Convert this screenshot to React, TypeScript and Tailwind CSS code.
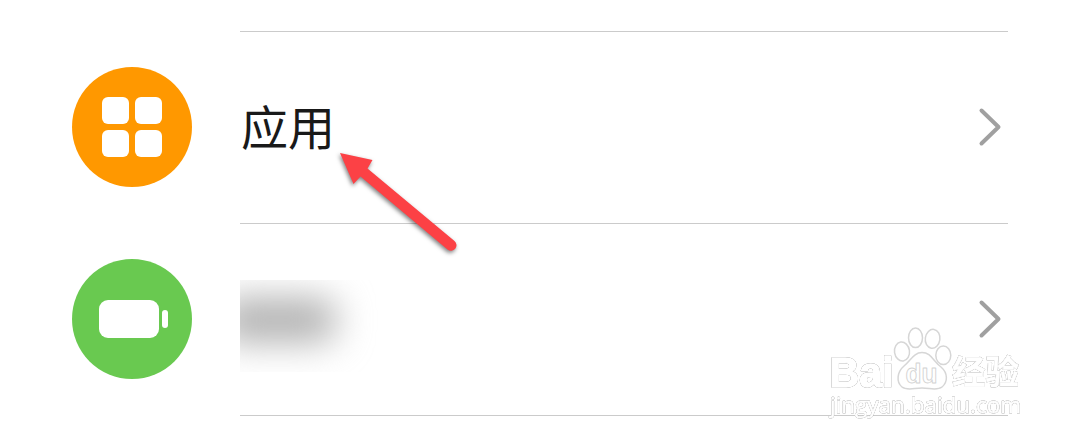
import type { ReactNode } from 'react'

function AppsIcon() {
  return (
    <div className="grid grid-cols-2 gap-1.5">
      {[0, 1, 2, 3].map(i => (
        <span key={i} className="size-[27px] rounded-[6px] bg-white" />
      ))}
    </div>
  )
}

function BatteryIcon() {
  return (
    <div className="flex items-center gap-[3px] pl-[3px]">
      <span className="h-[38px] w-[60px] rounded-[9px] bg-white" />
      <span className="h-[18px] w-1.5 rounded-full bg-white" />
    </div>
  )
}

function Chevron() {
  return (
    <svg width="24" height="40" viewBox="0 0 24 40" fill="none" className="mb-0.5 mr-[6px] shrink-0">
      <path d="M3.500 3.500 20.500 20 3.500 36.500" stroke="#a0a0a0" strokeWidth="4" strokeLinecap="round" strokeLinejoin="round" />
    </svg>
  )
}

interface RowProps { icon: ReactNode; color: string; children: ReactNode }

function Row({ icon, color, children }: RowProps) {
  return (
    <li className="flex h-48 items-center">
      <div className={`flex size-[120px] shrink-0 items-center justify-center rounded-full ${color}`}>
        {icon}
      </div>
      <div className="ml-12 flex h-full flex-1 items-center justify-between border-t border-[#cbcbcb]">
        {children}
        <Chevron />
      </div>
    </li>
  )
}

function Arrow() {
  return (
    <svg className="absolute left-[325px] top-[140px]" width="145" height="125" viewBox="325 140 145 125">
      <path
        d="M340 153 372.5 160 367.500 168.500 454.500 241A5 5 0 0 1 447.500 249.500L360.500 176.500 353.500 184Z"
        fill="#fc4145"
        className="drop-shadow-[-1px_2px_2px_rgba(0,0,0,0.5)]"
      />
    </svg>
  )
}

function Watermark() {
  return (
    <svg
      className="absolute left-[820px] top-[320px]"
      width="210" height="105" viewBox="820 320 210 105"
      fill="white" stroke="white" strokeLinejoin="round"
    >
      <g strokeWidth="1.4" className="[filter:drop-shadow(0_0_0.6px_rgba(0,0,0,0.42))_drop-shadow(0_0_0.5px_rgba(0,0,0,0.2))]">
        <text x="829.500" y="387" fontSize="42" fontWeight="700" textLength="64" lengthAdjust="spacingAndGlyphs" fontFamily="'Liberation Sans', sans-serif">Bai</text>
        <text x="952" y="384" fontSize="33.500" fontWeight="700" textLength="67" strokeWidth="0.7" fontFamily="'Noto Sans CJK SC', sans-serif">经验</text>
        <text x="830" y="413" fontSize="22" textLength="191" lengthAdjust="spacingAndGlyphs" strokeWidth="0.8" fontFamily="'Open Sans', sans-serif">jingyan.baidu.com</text>
      </g>
      <g stroke="#d6d6d6" strokeWidth="1.500">
        <ellipse cx="902" cy="351.500" rx="7.500" ry="9.500" transform="rotate(-8 902 351.5)" />
        <ellipse cx="915.500" cy="337.800" rx="7" ry="9.800" />
        <ellipse cx="932.600" cy="338.800" rx="7.300" ry="9.500" transform="rotate(8 932.6 338.8)" />
        <ellipse cx="943.300" cy="355.300" rx="7.500" ry="9.300" />
        <path d="M922 352.500C914 352.500 911 360 904 366C897 372 896 382 902 387C907 391 914 388 922 388S937 391 942 387C948 382 948 373 941 367C933 361 931 352.500 922 352.500Z" />
      </g>
      <text x="905.500" y="383" fontSize="27" fontWeight="700" textLength="32" lengthAdjust="spacingAndGlyphs" stroke="#d2d2d2" strokeWidth="0.9" fontFamily="'Liberation Sans', sans-serif">du</text>
    </svg>
  )
}

export default function App() {
  return (
    <div className="relative h-[443px] w-[1080px] overflow-hidden bg-white pl-[72px] pr-[72px] pt-[31px] font-['Noto_Sans_CJK_SC',sans-serif]">
      <ul>
        <Row icon={<AppsIcon />} color="bg-[#ff9800]">
          <span className="mb-1.5 ml-px text-[47px] leading-[60px] text-[#191919]">应用</span>
        </Row>
        <Row icon={<BatteryIcon />} color="bg-[#69c950]">
          {/* redacted label */}
          <div className="mt-[13px] flex h-[92px] w-[140px] items-center overflow-hidden">
            <span className="-ml-5 h-[44px] w-[116px] -translate-y-1.5 rounded-2xl bg-[#b0b0b0] blur-[18px]" />
          </div>
        </Row>
      </ul>
      <div className="ml-[168px] border-t border-[#cbcbcb]" />
      <Arrow />
      <Watermark />
    </div>
  )
}
